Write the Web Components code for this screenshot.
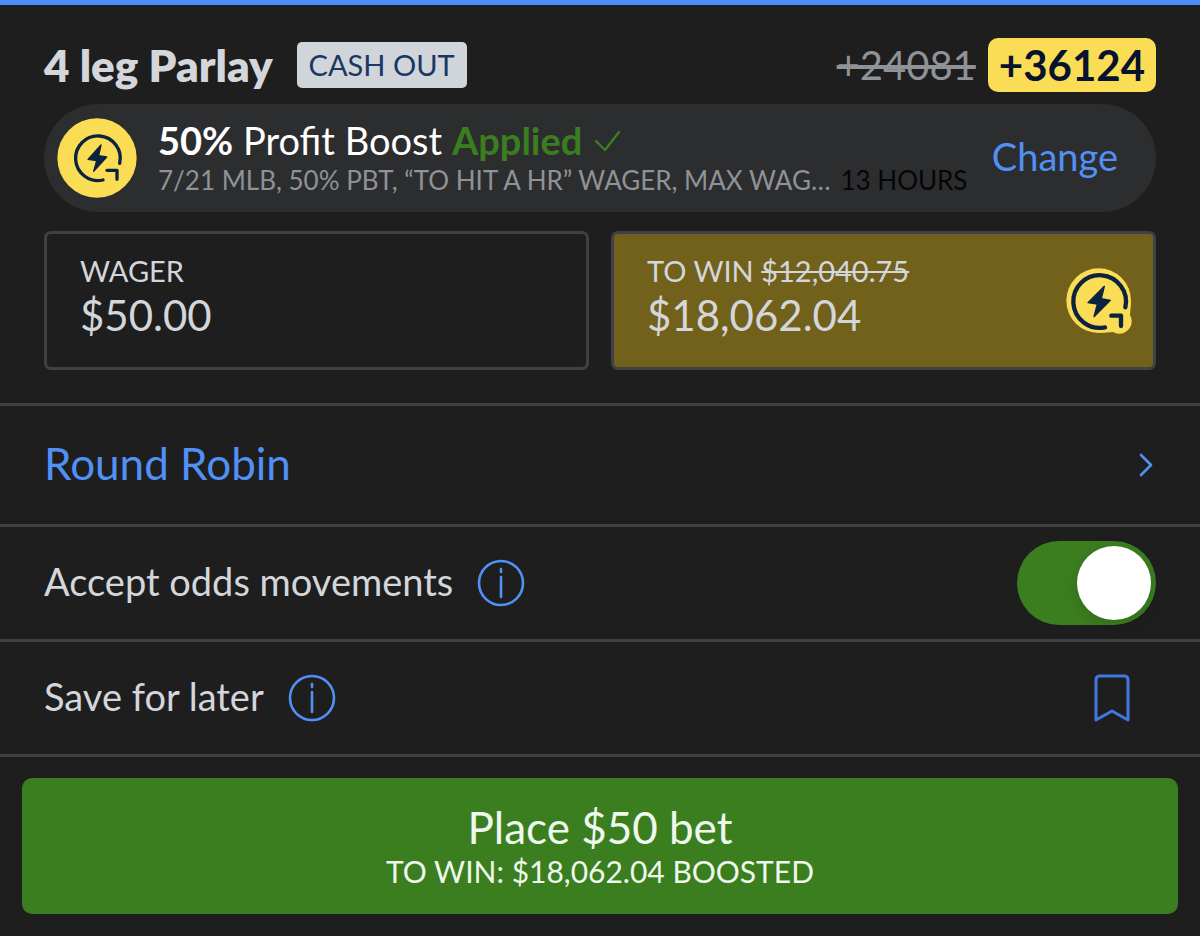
<!DOCTYPE html>
<html lang="en">
<head>
<meta charset="utf-8">
<meta name="viewport" content="width=device-width, initial-scale=1">
<title>Bet slip</title>
<style>
  :root {
    --bg: #1e1e1e;
    --panel: #2c2d2f;
    --line: #404145;
    --text: #d3d6da;
    --muted: #8f9297;
    --link: #5190f5;
    --green: #3b7e20;
    --yellow: #fadd55;
    --navy: #0c2340;
    --gutter: 44px;
    --fs-title: 44px;
    --fs-amount: 42px;
    --fs-body: 38px;
    --fs-caps: 29px;
    --fs-small: 26px;
  }
  body {
    margin: 0;
    background: var(--bg);
    color: var(--text);
    font-family: Lato, "Liberation Sans", sans-serif;
  }
</style>
</head>
<body>
<bet-slip>
  <slip-header slot="header" name="4 leg Parlay" tag="CASH OUT" old-odds="+24081" odds="+36124"></slip-header>
  <boost-banner slot="header" amount="50%" name="Profit Boost" terms="7/21 MLB, 50% PBT, “TO HIT A HR” WAGER, MAX WAG…" expires="13 HOURS"></boost-banner>
  <amount-field slot="amounts" label="WAGER" value="$50.00"></amount-field>
  <amount-field slot="amounts" label="TO WIN" old="$12,040.75" value="$18,062.04" boosted></amount-field>
  <link-row label="Round Robin"></link-row>
  <toggle-row label="Accept odds movements"></toggle-row>
  <save-row label="Save for later"></save-row>
  <place-bet slot="footer" note="TO WIN: $18,062.04 BOOSTED">Place $50 bet</place-bet>
</bet-slip>

<script>
class SlipElement extends HTMLElement {
  constructor() {
    super();
    this.shadow = this.attachShadow({ mode: 'open' });
  }

  attr(name) {
    return this.getAttribute(name) || '';
  }

  connectedCallback() {
    this.shadow.innerHTML = `
      <style>
        :host { display: block; }
        * { box-sizing: border-box; }
        button, input { font: inherit; color: inherit; margin: 0; padding: 0; border: 0; background: none; }
        button { cursor: pointer; }
        svg { display: block; fill: none; stroke: currentColor; stroke-linecap: round; stroke-linejoin: round; }
        ${this.renderStyle()}
      </style>
      ${this.renderHTML()}
    `;
  }
}

class BetSlip extends SlipElement {
  renderStyle() {
    return `
      :host { border-top: 5px solid #4a8df8; }
      header { padding: 33px var(--gutter) 33px; }
      .amounts {
        display: grid;
        grid-template-columns: 1fr 1fr;
        gap: 22px;
        margin-top: 19px;
      }
      footer { padding: 21px 22px; border-top: 3px solid var(--line); }
    `;
  }

  renderHTML() {
    return `
      <main>
        <header>
          <slot name="header"></slot>
          <div class="amounts"><slot name="amounts"></slot></div>
        </header>
        <slot></slot>
        <footer><slot name="footer"></slot></footer>
      </main>
    `;
  }
}

class SlipHeader extends SlipElement {
  renderStyle() {
    return `
      :host { margin-bottom: 12px; }
      .bar { display: flex; align-items: center; justify-content: space-between; }
      .side { display: flex; align-items: center; }
      .name { gap: 24px; }
      .prices { gap: 12px; }
      h1 { margin: 0; font-size: var(--fs-title); line-height: 54px; font-weight: 800; }
      .tag {
        padding: 0 12px;
        border-radius: 5px;
        background: #d0d5da;
        color: #1b3564;
        font-size: var(--fs-caps);
        line-height: 46px;
      }
      s { color: var(--muted); font-size: 40px; }
      strong {
        padding: 0 11px;
        border-radius: 10px;
        background: var(--yellow);
        color: #06122e;
        font-size: var(--fs-amount);
        line-height: 54px;
      }
    `;
  }

  renderHTML() {
    return `
      <div class="bar">
        <div class="side name">
          <h1>${this.attr('name')}</h1>
          <span class="tag">${this.attr('tag')}</span>
        </div>
        <div class="side prices">
          <s>${this.attr('old-odds')}</s>
          <strong>${this.attr('odds')}</strong>
        </div>
      </div>
    `;
  }
}

class BoostBanner extends SlipElement {
  renderStyle() {
    return `
      .pill {
        display: flex;
        align-items: center;
        padding: 14px 38px 14px 13px;
        border-radius: 54px;
        background: var(--panel);
      }
      .coin { flex: none; width: 80px; height: 80px; margin-right: 21px; color: var(--navy); }
      .info { flex: 1; min-width: 0; white-space: nowrap; }
      .title {
        display: flex;
        align-items: center;
        gap: 12px;
        color: #fff;
        font-size: var(--fs-body);
        line-height: 44px;
      }
      .ok { color: var(--green); }
      .check { width: 28px; height: 24px; color: var(--green); }
      .terms { display: flex; gap: 10px; font-size: var(--fs-small); line-height: 36px; color: var(--muted); }
      .text { overflow: hidden; text-overflow: ellipsis; }
      .time { color: #060607; }
      .change { margin-left: 16px; padding-bottom: 4px; color: var(--link); font-size: var(--fs-body); }
    `;
  }

  renderHTML() {
    return `
      <div class="pill">
        <svg class="coin" viewBox="0 0 240 240" stroke-width="10" aria-hidden="true">
          <circle cx="120" cy="120" r="119" fill="#fadd55" stroke="none"/>
          <path d="M188 136A67 67 0 1 0 138 186M150 157H180V184"/>
          <path d="M132 81L93 124L119 128L110 160L149 117L125 113Z" fill="currentColor" stroke-width="4"/>
        </svg>
        <div class="info">
          <div class="title">
            <span><b>${this.attr('amount')}</b> ${this.attr('name')} <b class="ok">Applied</b></span>
            <svg class="check" viewBox="0 0 28 24" stroke-width="2.4" aria-hidden="true"><path d="M2 13L11 22L25 4"/></svg>
          </div>
          <div class="terms">
            <span class="text">${this.attr('terms')}</span>
            <span class="time">${this.attr('expires')}</span>
          </div>
        </div>
        <button class="change" type="button">Change</button>
      </div>
    `;
  }
}

class AmountField extends SlipElement {
  renderStyle() {
    return `
      :host { min-width: 0; }
      .box {
        display: flex;
        align-items: center;
        justify-content: space-between;
        padding: 18px 21px 27px 33px;
        border: 3px solid var(--line);
        border-radius: 7px;
      }
      :host([boosted]) .box { background: #72611b; }
      .fields { flex: 1; min-width: 0; }
      label { display: block; font-size: var(--fs-caps); line-height: 38px; }
      input { display: block; width: 100%; font-size: var(--fs-amount); line-height: 50px; height: 50px; }
      svg { flex: none; width: 66px; height: 66px; margin-top: 9px; color: var(--navy); }
    `;
  }

  renderHTML() {
    const boosted = this.hasAttribute('boosted');
    return `
      <div class="box">
        <div class="fields">
          <label for="amount">${this.attr('label')}${boosted ? ` <s>${this.attr('old')}</s>` : ''}</label>
          <input id="amount" type="text" value="${this.attr('value')}" ${boosted ? 'readonly' : ''}>
        </div>
        ${boosted ? this.renderIcon() : ''}
      </div>
    `;
  }

  renderIcon() {
    return `
      <svg viewBox="48 52 198 198" stroke-width="13" aria-hidden="true">
        <g fill="#fadd55" stroke="none">
          <circle cx="146" cy="150" r="97"/>
          <circle cx="208" cy="212" r="37"/>
          <path d="M243 150L240 194L190 244L150 247Z"/>
        </g>
        <path d="M226 170A79 79 0 1 0 165 230M184 195H213V226"/>
        <path d="M163 107L114 156L142 160L132 198L181 149L154 144Z" fill="currentColor" stroke-width="4"/>
      </svg>
    `;
  }
}

// base for the full-width rows under the amounts
class SlipRow extends SlipElement {
  renderStyle() {
    return `
      .row {
        display: flex;
        align-items: center;
        width: 100%;
        padding: 0 var(--gutter);
        height: 115px;
        border-top: 3px solid var(--line);
        font-size: var(--fs-body);
        text-decoration: none;
      }
      .name { padding-bottom: 4px; }
      .end { margin-left: auto; }
      .info { margin-left: 24px; color: var(--link); }
    `;
  }

  renderInfo() {
    return `
      <button class="info" type="button" aria-label="About ${this.attr('label')}">
        <svg width="48" height="48" viewBox="0 0 48 48" stroke-width="2.6">
          <circle cx="24" cy="24" r="22"/>
          <path d="M24 10V13M24 18V38"/>
        </svg>
      </button>
    `;
  }
}

class LinkRow extends SlipRow {
  renderStyle() {
    return `
      ${super.renderStyle()}
      .row { height: 121px; color: var(--link); font-size: var(--fs-title); }
    `;
  }

  renderHTML() {
    return `
      <a class="row" href="#round-robin">
        <span class="name">${this.attr('label')}</span>
        <svg class="end" width="18" height="26" viewBox="0 0 18 26" stroke-width="2.6" aria-hidden="true"><path d="M3 3L13 13L3 23"/></svg>
      </a>
    `;
  }
}

class ToggleRow extends SlipRow {
  renderStyle() {
    return `
      ${super.renderStyle()}
      input {
        appearance: none;
        display: flex;
        width: 139px;
        height: 84px;
        padding: 5px;
        border-radius: 42px;
        background: #55575b;
        cursor: pointer;
      }
      input::before {
        content: "";
        width: 74px;
        height: 74px;
        border-radius: 50%;
        background: #fff;
        box-shadow: 0 4px 16px rgba(0, 0, 0, .15);
      }
      input:checked { justify-content: flex-end; background: var(--green); }
    `;
  }

  renderHTML() {
    return `
      <div class="row">
        <label class="name" for="toggle">${this.attr('label')}</label>
        ${this.renderInfo()}
        <input class="end" id="toggle" type="checkbox" role="switch" checked>
      </div>
    `;
  }
}

class SaveRow extends SlipRow {
  renderStyle() {
    return `
      ${super.renderStyle()}
      .save { margin-right: 26px; color: #3f78e0; }
    `;
  }

  renderHTML() {
    return `
      <div class="row">
        <span class="name">${this.attr('label')}</span>
        ${this.renderInfo()}
        <button class="end save" type="button" aria-label="${this.attr('label')}">
          <svg width="36" height="48" viewBox="0 0 36 48" stroke-width="3"><path d="M2 46V6Q2 2 6 2H30Q34 2 34 6V46L18 37Z"/></svg>
        </button>
      </div>
    `;
  }
}

class PlaceBet extends SlipElement {
  renderStyle() {
    return `
      button {
        display: block;
        width: 100%;
        padding: 24px 20px;
        border-radius: 10px;
        background: var(--green);
        color: #eef8ec;
        text-align: center;
      }
      .main, .note { display: block; }
      .main { font-size: var(--fs-title); line-height: 50px; }
      .note { font-size: 30px; line-height: 38px; }
    `;
  }

  renderHTML() {
    return `
      <button type="button">
        <span class="main"><slot></slot></span>
        <span class="note">${this.attr('note')}</span>
      </button>
    `;
  }
}

customElements.define('bet-slip', BetSlip);
customElements.define('slip-header', SlipHeader);
customElements.define('boost-banner', BoostBanner);
customElements.define('amount-field', AmountField);
customElements.define('link-row', LinkRow);
customElements.define('toggle-row', ToggleRow);
customElements.define('save-row', SaveRow);
customElements.define('place-bet', PlaceBet);
</script>
</body>
</html>
